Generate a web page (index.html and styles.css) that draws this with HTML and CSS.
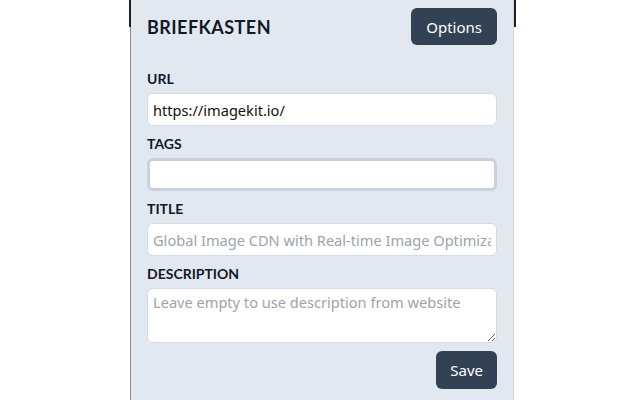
FILE: index.html
```html
<!DOCTYPE html>
<html>
<head>
<meta charset="utf-8">
<link rel="stylesheet" href="styles.css">
</head>
<body>
<div class="panel">
  <div class="header">
    <h1 class="title">BRIEFKASTEN</h1>
    <button class="btn">Options</button>
  </div>
  <div class="field">
    <label class="label">URL</label>
    <input class="input" type="text" value="https://imagekit.io/">
  </div>
  <div class="field">
    <label class="label">TAGS</label>
    <input class="input input-focus" type="text">
  </div>
  <div class="field">
    <label class="label">TITLE</label>
    <input class="input" type="text" placeholder="Global Image CDN with Real-time Image Optimization">
  </div>
  <div class="field field-last">
    <label class="label">DESCRIPTION</label>
    <textarea class="input textarea" placeholder="Leave empty to use description from website"></textarea>
  </div>
  <div class="actions">
    <button class="btn btn-save">Save</button>
  </div>
</div>
</body>
</html>
```
FILE: styles.css
```css
html, body {
  margin: 0;
  padding: 0;
  background: #ffffff;
  height: 400px;
  overflow: hidden;
}
.panel {
  position: relative;
  box-sizing: border-box;
  width: 384px;
  height: 400px;
  margin-left: calc(50% - 190px);
  padding: 8px 16px 0 16px;
  background: #e2e8f0;
  border-left: 1px solid #8a8a8a;
  border-right: 1px solid #d6d6d6;
  font-family: Lato, "Open Sans", sans-serif;
  color: #111827;
}
.panel::before,
.panel::after {
  content: "";
  position: absolute;
  top: 0;
  width: 2px;
  height: 27px;
  background: #1f1f2a;
}
.panel::before { left: -2px; }
.panel::after { right: -3px; }
.header {
  display: flex;
  justify-content: space-between;
  align-items: center;
  margin-bottom: 24px;
}
.title {
  margin: 0;
  font-size: 18px;
  font-weight: 700;
  letter-spacing: 0.45px;
}
.btn {
  height: 37px;
  padding: 0 15px;
  border: none;
  border-radius: 6px;
  background: #334155;
  color: #ffffff;
  font-family: "Noto Sans", Lato, sans-serif;
  font-size: 15px;
}
.field {
  display: flex;
  flex-direction: column;
  margin-bottom: 8px;
}
.field-last { margin-bottom: 8px; }
.label {
  height: 20px;
  line-height: 20px;
  font-size: 14px;
  font-weight: 700;
  margin-bottom: 4px;
}
.input {
  box-sizing: border-box;
  height: 33px;
  width: 100%;
  padding: 0 5px;
  border: 1px solid #d5dce5;
  border-radius: 6px;
  background: #ffffff;
  font-family: "Noto Sans", sans-serif;
  font-size: 14.6px;
  color: #111;
  outline: none;
}
.input::placeholder { color: #9ca3af; }
.input-focus {
  border: 3px solid #c8d1dd;
}
.textarea {
  height: 55px;
  padding: 3px 5px;
  resize: vertical;
  line-height: 21px;
}
.actions {
  display: flex;
  justify-content: flex-end;
}
.btn-save {
  height: 38px;
  padding: 0 14px;
}
```
